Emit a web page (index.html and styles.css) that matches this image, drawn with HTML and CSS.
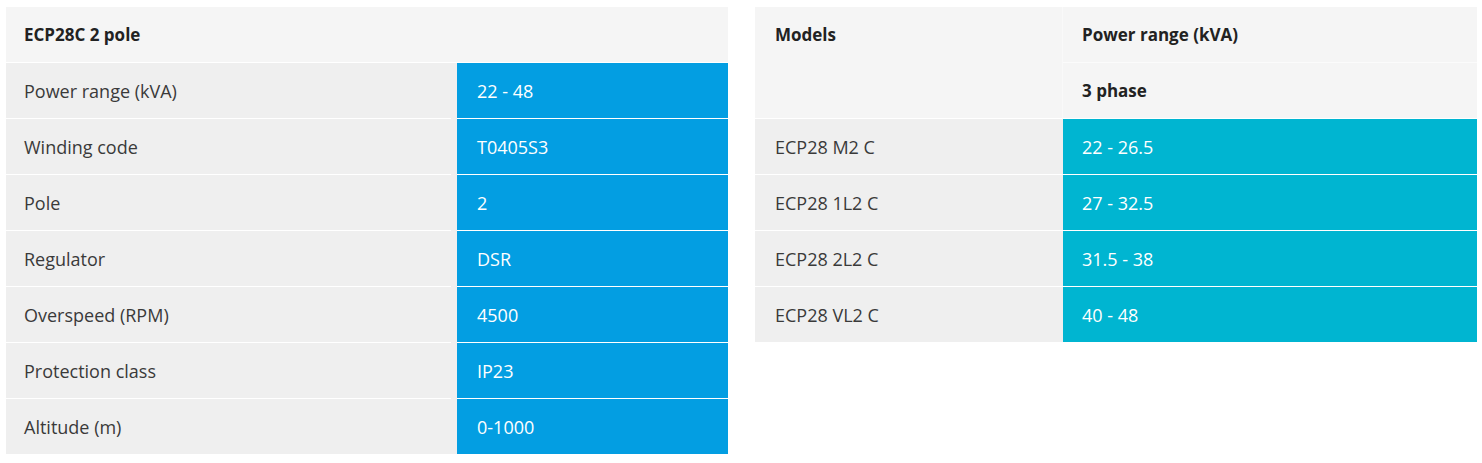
FILE: index.html
```html
<!DOCTYPE html>
<html lang="en">
<head>
<meta charset="utf-8">
<title>ECP28C 2 pole</title>
<link rel="stylesheet" href="styles.css">
</head>
<body>
<div class="page">
  <div class="spec">
    <div class="spec-head">ECP28C 2 pole</div>
    <div class="spec-row"><div class="label">Power range (kVA)</div><div class="val">22 - 48</div></div>
    <div class="spec-row"><div class="label">Winding code</div><div class="val">T0405S3</div></div>
    <div class="spec-row"><div class="label">Pole</div><div class="val">2</div></div>
    <div class="spec-row"><div class="label">Regulator</div><div class="val">DSR</div></div>
    <div class="spec-row"><div class="label">Overspeed (RPM)</div><div class="val">4500</div></div>
    <div class="spec-row"><div class="label">Protection class</div><div class="val">IP23</div></div>
    <div class="spec-row last"><div class="label">Altitude (m)</div><div class="val">0-1000</div></div>
  </div>
  <div class="models">
    <div class="m-head models-h">Models</div>
    <div class="m-head power-h">Power range (kVA)</div>
    <div class="m-head phase-h">3 phase</div>
    <div class="m-label">ECP28 M2 C</div><div class="m-val">22 - 26.5</div>
    <div class="m-label">ECP28 1L2 C</div><div class="m-val">27 - 32.5</div>
    <div class="m-label">ECP28 2L2 C</div><div class="m-val">31.5 - 38</div>
    <div class="m-label last">ECP28 VL2 C</div><div class="m-val last">40 - 48</div>
  </div>
</div>
</body>
</html>
```
FILE: styles.css
```css
html, body {
  margin: 0;
  padding: 0;
  background: #ffffff;
}
body {
  font-family: "Open Sans", "Noto Sans", sans-serif;
  font-size: 18px;
  color: #3a3a3a;
}
.page {
  display: flex;
  gap: 27px;
  padding: 7px 5px 0 6px;
}
.spec {
  width: 722px;
  display: flex;
  flex-direction: column;
}
.spec-head {
  height: 55px;
  border-bottom: 1px solid #ffffff;
  background: #f5f5f5;
  display: flex;
  align-items: center;
  padding-left: 18px;
  font-size: 17px;
  font-weight: 700;
  color: #222;
}
.spec-row {
  display: grid;
  grid-template-columns: 451px 271px;
  height: 56px;
}
.label {
  display: flex;
  align-items: center;
  padding-left: 18px;
  background: linear-gradient(#ffffff, #ffffff) left bottom / calc(100% - 6px) 1px no-repeat, #efefef;
}
.val {
  display: flex;
  align-items: center;
  padding-left: 20px;
  color: #ffffff;
  background: #039ee2;
  border-bottom: 1px solid #ffffff;
}
.spec-row.last .label { background: #efefef; }
.spec-row.last .val { border-bottom: 0; }
.spec-row.last { height: 55px; }

.models {
  width: 722px;
  display: grid;
  grid-template-columns: 308px 414px;
  grid-template-rows: 56px 56px 56px 56px 56px 55px;
  align-self: flex-start;
}
.m-head {
  background: #f5f5f5;
  display: flex;
  align-items: center;
  font-size: 17px;
  font-weight: 700;
  color: #222;
}
.models-h {
  grid-row: 1 / span 2;
  align-items: flex-start;
  padding: 16px 0 0 20px;
  border-bottom: 1px solid #ffffff;
  border-right: 1px solid #f9f9f9;
}
.power-h {
  padding-left: 19px;
  border-bottom: 1px solid #fbfbfb;
}
.phase-h {
  padding-left: 19px;
  border-bottom: 1px solid #ffffff;
}
.m-label {
  display: flex;
  align-items: center;
  padding-left: 20px;
  background: #efefef;
  border-bottom: 1px solid #ffffff;
}
.m-val {
  display: flex;
  align-items: center;
  padding-left: 19px;
  color: #ffffff;
  background: #00b5d1;
  border-bottom: 1px solid #ffffff;
}
.m-label.last, .m-val.last { border-bottom: 0; }
```
